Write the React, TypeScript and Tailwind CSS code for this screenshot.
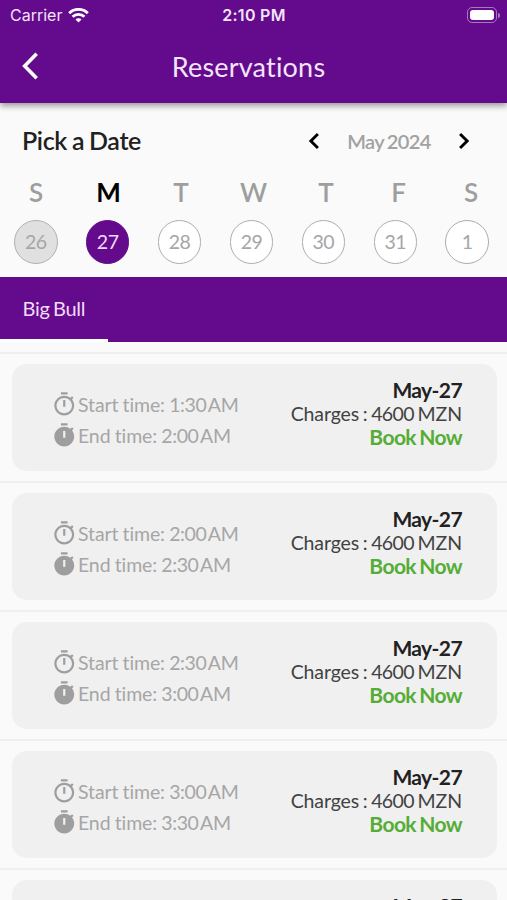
import React from "react";

const days = [
  { letter: "S", date: "26", state: "past" },
  { letter: "M", date: "27", state: "selected" },
  { letter: "T", date: "28", state: "open" },
  { letter: "W", date: "29", state: "open" },
  { letter: "T", date: "30", state: "open" },
  { letter: "F", date: "31", state: "open" },
  { letter: "S", date: "1", state: "open" },
];

const slots = [
  { start: "1:30", end: "2:00" },
  { start: "2:00", end: "2:30" },
  { start: "2:30", end: "3:00" },
  { start: "3:00", end: "3:30" },
  { start: "3:30", end: "4:00" },
];

const circleStyles: Record<string, string> = {
  past: "border-[#b0b0b0] bg-[#e0e0e0] text-[#a6a6a6]",
  selected: "border-[#640a8c] bg-[#640a8c] text-[#f0dcf8]",
  open: "border-[#acacac] bg-white text-[#a6a6a6]",
};

function Chevron({ className, points, width }: { className: string; points: string; width: number }) {
  return (
    <svg className={className} viewBox="0 0 24 24" fill="none" stroke="currentColor" strokeWidth={width}>
      <polyline points={points} />
    </svg>
  );
}

function TimerIcon({ filled }: { filled?: boolean }) {
  const ring = filled ? "" : "M12 20c-3.87 0-7-3.13-7-7s3.13-7 7-7 7 3.13 7 7-3.13 7-7 7z";
  return (
    <svg className="-mt-[1px] mr-px h-[27px] w-[26.5px] shrink-0" viewBox="0 0 24 24" fill="#9e9e9e" fillRule="evenodd">
      <path
        d={
          "M15 1H9v2h6V1zM11 14h2V8h-2v6zM19.03 7.39l1.42-1.42c-.43-.51-.9-.99-1.41-1.41l-1.42 1.42C16.07 4.74 14.12 4 12 4c-4.97 0-9 4.03-9 9s4.02 9 9 9 9-4.03 9-9c0-2.12-.74-4.07-1.97-5.61z" +
          ring
        }
      />
    </svg>
  );
}

function SlotTime({ label, time, filled }: { label: string; time: string; filled?: boolean }) {
  return (
    <div className="flex h-[31.3px] items-center">
      <TimerIcon filled={filled} />
      <span className="whitespace-pre">
        {label}: <span className="tracking-[-0.4px]">{time}</span>
        <span className="-ml-[2.2px]"> AM</span>
      </span>
    </div>
  );
}

function StatusBar() {
  return (
    <div className="grid h-[30px] grid-cols-3 items-center pl-[10px] pr-[7px] font-['Inter',sans-serif] text-[#f3e4fa]">
      <div className="flex items-center gap-[6px]">
        <span className="text-[16px]">Carrier</span>
        <svg className="h-[15px] w-[21px]" viewBox="0 0 21 15" fill="none" stroke="#fff" strokeWidth="2.9">
          <path d="M1.2 5.2a13.2 13.2 0 0 1 18.6 0" />
          <path d="M4.6 8.8a8.4 8.4 0 0 1 11.8 0" />
          <path d="M10.5 14.6l-3-3a4.2 4.2 0 0 1 6 0z" fill="#fff" stroke="none" />
        </svg>
      </div>
      <span className="-ml-[2px] text-center text-[16px] font-semibold tracking-[0.3px]">2:10 PM</span>
      <div className="flex items-center justify-end gap-[1px]">
        <div className="h-[16px] w-[30px] rounded-[5px] border border-[#a678be] p-[2px]">
          <div className="h-full w-full rounded-[3px] bg-white" />
        </div>
        <div className="h-[5px] w-[2px] rounded-r-full bg-[#a678be]" />
      </div>
    </div>
  );
}

export default function App() {
  return (
    <div className="flex h-[900px] w-[507px] flex-col overflow-hidden bg-[#fafafa] font-['Lato',sans-serif] [font-variant-ligatures:none]">
      <header className="relative h-[103px] shrink-0 bg-[#640a8c] shadow-[0_3px_6px_rgba(0,0,0,0.38)]">
        <StatusBar />
        <div className="grid h-[72px] grid-cols-[60px_1fr_70px] items-center">
          <Chevron className="ml-[14px] size-[32px] text-white" points="17,2.8 8,12 17,21.2" width={2.7} />
          <h1 className="text-center text-[27px] leading-none tracking-[0.2px] text-[#f3e4fa]">Reservations</h1>
        </div>
      </header>

      <section className="h-[174px] shrink-0">
        <div className="flex h-[75px] items-center justify-between pl-[22px] pr-[34px]">
          <h2 className="text-[25px] font-semibold tracking-[-0.35px] text-[#212121] [word-spacing:-1px]">Pick a Date</h2>
          <div className="flex items-center">
            <Chevron className="size-[20px] text-black" points="15.5,3.5 7,12 15.5,20.5" width={3.5} />
            <span className="w-[128px] text-center text-[20px] font-semibold tracking-[-0.6px] text-[#a2a2a2] [word-spacing:-1.2px]">
              May 2024
            </span>
            <Chevron className="size-[20px] text-black" points="8.5,3.5 17,12 8.5,20.5" width={3.5} />
          </div>
        </div>
        <div className="flex h-[42px] justify-between px-[14px]">
          {days.map((day, i) => (
            <span
              key={i}
              className={
                "w-[44px] text-center text-[26px] leading-[28px] " +
                (day.state === "selected" ? "font-bold text-black" : "font-semibold text-[#9e9e9e]")
              }
            >
              {day.letter}
            </span>
          ))}
        </div>
        <div className="flex justify-between pl-[14px] pr-[18px]">
          {days.map((day, i) => (
            <span
              key={i}
              className={
                "flex size-[43.5px] items-center justify-center rounded-full border-[1.5px] text-[19.5px] tracking-[-0.5px] " +
                circleStyles[day.state]
              }
            >
              {day.date}
            </span>
          ))}
        </div>
      </section>

      <nav className="flex h-[65px] shrink-0 bg-[#640a8c]">
        <div className="w-[108px] border-b-[3px] border-white pl-[22.5px] text-[20px] leading-[63px] tracking-[-0.3px] text-[#f0dcf8] [word-spacing:-1.3px]">
          Big Bull
        </div>
      </nav>

      <main className="pt-[10px]">
        {slots.map((slot) => (
          <article key={slot.start} className="h-[129px] border-t-2 border-[#efefef] pl-[12px] pr-[10.5px] pt-[10px]">
            <div className="flex h-[107px] justify-between rounded-[15px] bg-[#f0f0f0] pl-[38.5px] pr-[34.5px]">
              <div className="flex flex-col pt-[25px] text-[19.5px] tracking-[-0.12px] text-[#a6a6a6] [word-spacing:-0.6px]">
                <SlotTime label="Start time" time={slot.start} />
                <SlotTime label="End time" time={slot.end} filled />
              </div>
              <div className="pt-[14px] text-right text-[19.5px] leading-[23.5px] [word-spacing:-1.3px]">
                <div className="text-[21px] font-bold tracking-[-0.6px] text-[#212121]">May-27</div>
                <div className="tracking-[-0.1px] text-[#424242]">
                  Charges : <span className="tracking-[-0.6px]">4600</span> MZN
                </div>
                <div className="text-[21px] font-bold tracking-[-0.6px] text-[#55ad36]">Book Now</div>
              </div>
            </div>
          </article>
        ))}
      </main>
    </div>
  );
}
